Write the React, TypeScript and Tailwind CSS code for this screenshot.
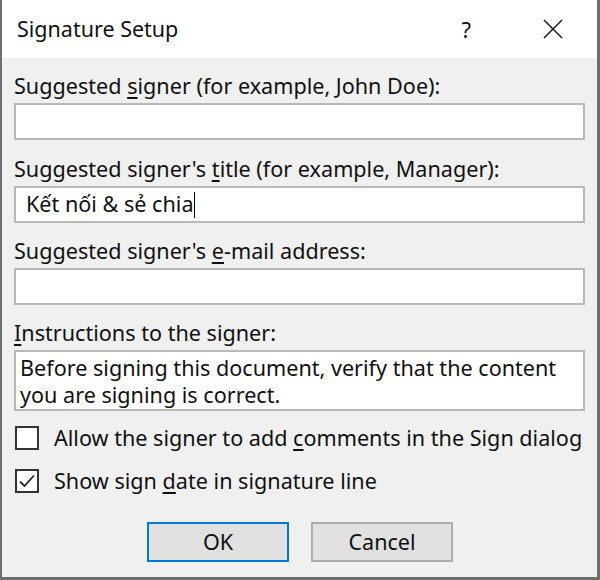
import React from "react";

const font = { fontFamily: '"Noto Sans", "Open Sans", sans-serif' };

function U({ children }: { children: React.ReactNode }) {
  return <span className="underline underline-offset-[3px] decoration-[1.5px]">{children}</span>;
}

function Label({ children }: { children: React.ReactNode }) {
  return <div className="h-[28px] mb-[3px] leading-[28px] text-[21.6px] text-[#111] whitespace-nowrap">{children}</div>;
}

function Input({ children }: { children?: React.ReactNode }) {
  return (
    <div className="h-[37px] w-full bg-white border-2 border-[#b8b8b8] pl-[10px] text-[21.6px] text-[#111] flex items-center">
      {children}
    </div>
  );
}

function Checkbox({ checked, children }: { checked?: boolean; children: React.ReactNode }) {
  return (
    <div className="h-[32px] flex items-center gap-[15px] pl-[1px]">
      <div className="w-[24px] h-[24px] border-2 border-[#333] bg-white flex items-center justify-center">
        {checked && (
          <svg width="18" height="16" viewBox="0 0 18 16">
            <path d="M2 8.5 L6.5 13 L16 2.5" fill="none" stroke="#222" strokeWidth="1.8" />
          </svg>
        )}
      </div>
      <span className="text-[21.6px] text-[#111] whitespace-nowrap">{children}</span>
    </div>
  );
}

export default function App() {
  return (
    <div style={font} className="w-[600px] h-[580px] bg-[#f0f0f0] border-l-2 border-r-[3px] border-b-[3px] border-[#6e6e6e] flex flex-col overflow-hidden">
      <div className="h-[58px] bg-white flex items-center pl-[15px] shrink-0">
        <span className="text-[21.5px] text-[#111]">Signature Setup</span>
        <span className="ml-auto text-[22px] text-[#111] mr-[72px]">?</span>
        <svg width="20" height="20" viewBox="0 0 20 20" className="mr-[34px]">
          <path d="M1 1 L19 19 M19 1 L1 19" stroke="#222" strokeWidth="1.6" />
        </svg>
      </div>
      <div className="flex flex-col pl-[12px] pr-[12px] pt-[14px]">
        <div>
          <Label>
            Suggested <U>s</U>igner (for example, John Doe):
          </Label>
          <Input />
        </div>
        <div className="mt-[15px]">
          <Label>
            Suggested signer's <U>t</U>itle (for example, Manager):
          </Label>
          <Input>
            <span>Kết nối &amp; sẻ chia</span>
            <span className="inline-block w-[1.5px] h-[26px] bg-black" />
          </Input>
        </div>
        <div className="mt-[14px]">
          <Label>
            Suggested signer's <U>e</U>-mail address:
          </Label>
          <Input />
        </div>
        <div className="mt-[14px]">
          <Label>
            <U>I</U>nstructions to the signer:
          </Label>
          <div className="h-[61px] w-full bg-white border-2 border-[#b8b8b8] pl-[4px] pt-[2px] text-[21.6px] leading-[27px] text-[#111] whitespace-nowrap overflow-hidden">
            Before signing this document, verify that the content
            <br />
            you are signing is correct.
          </div>
        </div>
        <div className="mt-[11px] flex flex-col gap-[11px]">
          <Checkbox>
            Allow the signer to add <U>c</U>omments in the Sign dialog
          </Checkbox>
          <Checkbox checked>
            Show sign <U>d</U>ate in signature line
          </Checkbox>
        </div>
        <div className="mt-[25px] flex gap-[22px] pl-[133px]">
          <button className="w-[142px] h-[40px] bg-[#e1e1e1] border-2 border-[#0078d7] text-[21.6px] text-[#111]">OK</button>
          <button className="w-[142px] h-[40px] bg-[#e1e1e1] border-2 border-[#adadad] text-[21.6px] text-[#111]">Cancel</button>
        </div>
      </div>
    </div>
  );
}
